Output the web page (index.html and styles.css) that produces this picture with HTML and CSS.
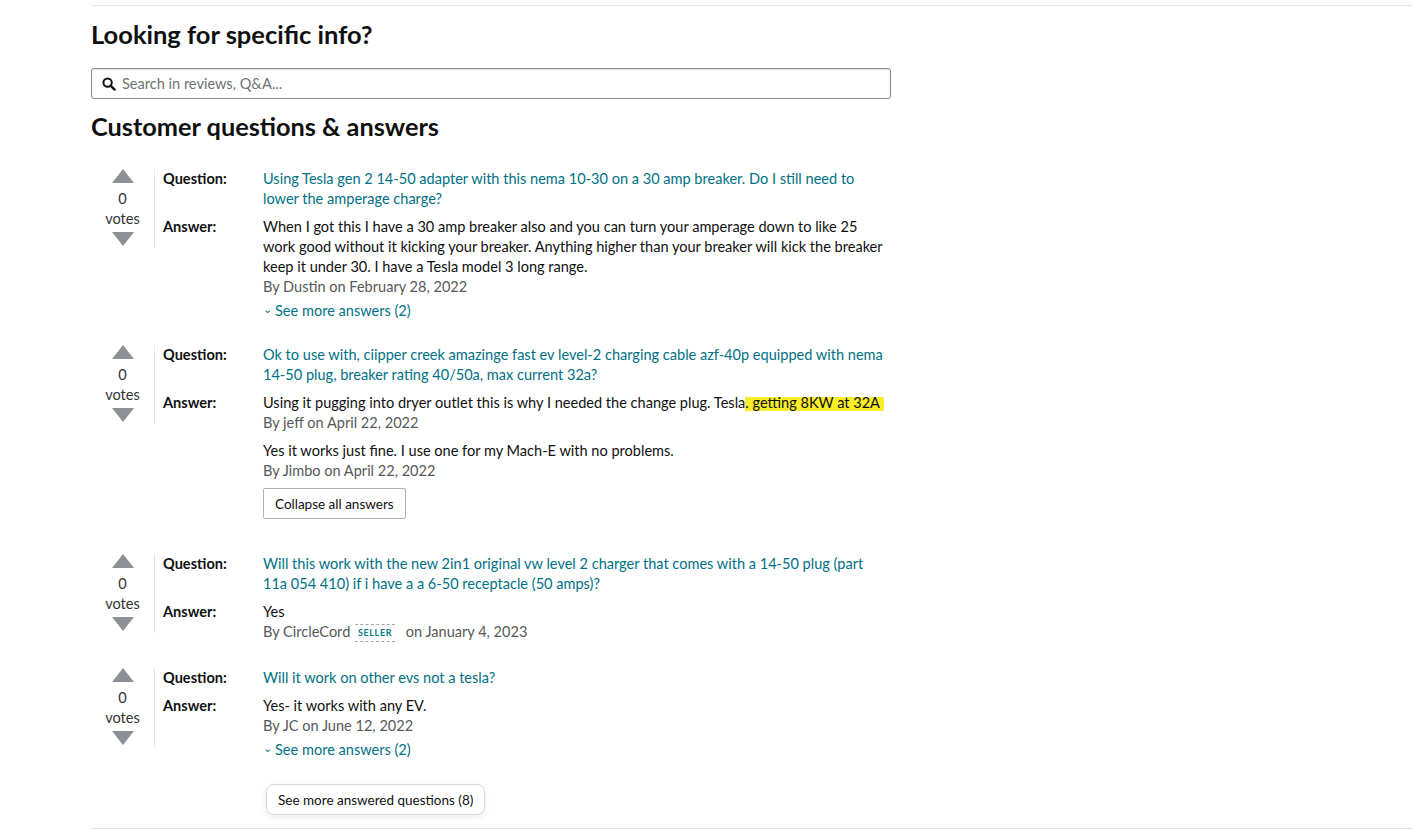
FILE: index.html
```html
<!DOCTYPE html>
<html lang="en">
<head>
    <meta charset="UTF-8">
    <meta name="viewport" content="width=device-width, initial-scale=1.0">
    <title>Customer questions &amp; answers</title>
    <link rel="stylesheet" href="styles.css">
</head>
<body>

<div class="page">
    <hr class="divider top">

    <h2 class="section-title">Looking for specific info?</h2>
    <div class="search">
        <svg class="search-icon" width="14" height="14" viewBox="0 0 14 14">
            <circle cx="5.6" cy="5.6" r="4.2" fill="none" stroke="#111" stroke-width="2"/>
            <path d="M8.6 8.6 L12.6 12.6" stroke="#111" stroke-width="2.4" stroke-linecap="round"/>
        </svg>
        <input type="text" placeholder="Search in reviews, Q&amp;A...">
    </div>

    <h2 class="section-title qa-title">Customer questions &amp; answers</h2>

    <div class="qa-list">
        <div class="qa">
            <div class="votes">
                <svg class="arrow" width="22" height="14" viewBox="0 0 22 14"><path d="M11 0 L22 14 L0 14 Z"/></svg>
                <span class="count">0</span>
                <span class="votes-label">votes</span>
                <svg class="arrow" width="22" height="14" viewBox="0 0 22 14"><path d="M0 0 L22 0 L11 14 Z"/></svg>
            </div>
            <div class="qa-body">
                <div class="qa-row">
                    <span class="label">Question:</span>
                    <div class="content"><a href="#">Using Tesla gen 2 14-50 adapter with this nema 10-30 on a 30 amp breaker. Do I still need to lower the amperage charge?</a></div>
                </div>
                <div class="qa-row">
                    <span class="label">Answer:</span>
                    <div class="content">
                        <p class="answer">When I got this I have a 30 amp breaker also and you can turn your amperage down to like 25 work good without it kicking your breaker. Anything higher than your breaker will kick the breaker keep it under 30. I have a Tesla model 3 long range.</p>
                        <p class="byline">By Dustin on February 28, 2022</p>
                        <a href="#" class="more"><span class="chevron">&#8964;</span>See more answers (2)</a>
                    </div>
                </div>
            </div>
        </div>

        <div class="qa">
            <div class="votes">
                <svg class="arrow" width="22" height="14" viewBox="0 0 22 14"><path d="M11 0 L22 14 L0 14 Z"/></svg>
                <span class="count">0</span>
                <span class="votes-label">votes</span>
                <svg class="arrow" width="22" height="14" viewBox="0 0 22 14"><path d="M0 0 L22 0 L11 14 Z"/></svg>
            </div>
            <div class="qa-body">
                <div class="qa-row">
                    <span class="label">Question:</span>
                    <div class="content"><a href="#">Ok to use with, ciipper creek amazinge fast ev level-2 charging cable azf-40p equipped with nema 14-50 plug, breaker rating 40/50a, max current 32a?</a></div>
                </div>
                <div class="qa-row">
                    <span class="label">Answer:</span>
                    <div class="content">
                        <p class="answer">Using it pugging into dryer outlet this is why I needed the change plug. Tesla<span class="mark">. getting 8KW at 32A</span></p>
                        <p class="byline">By jeff on April 22, 2022</p>
                        <p class="answer next">Yes it works just fine. I use one for my Mach-E with no problems.</p>
                        <p class="byline">By Jimbo on April 22, 2022</p>
                        <button class="btn collapse">Collapse all answers</button>
                    </div>
                </div>
            </div>
        </div>

        <div class="qa">
            <div class="votes">
                <svg class="arrow" width="22" height="14" viewBox="0 0 22 14"><path d="M11 0 L22 14 L0 14 Z"/></svg>
                <span class="count">0</span>
                <span class="votes-label">votes</span>
                <svg class="arrow" width="22" height="14" viewBox="0 0 22 14"><path d="M0 0 L22 0 L11 14 Z"/></svg>
            </div>
            <div class="qa-body">
                <div class="qa-row">
                    <span class="label">Question:</span>
                    <div class="content"><a href="#">Will this work with the new 2in1 original vw level 2 charger that comes with a 14-50 plug (part 11a 054 410) if i have a a 6-50 receptacle (50 amps)?</a></div>
                </div>
                <div class="qa-row">
                    <span class="label">Answer:</span>
                    <div class="content">
                        <p class="answer">Yes</p>
                        <p class="byline with-badge">By CircleCord <span class="seller">SELLER</span> on January 4, 2023</p>
                    </div>
                </div>
            </div>
        </div>

        <div class="qa">
            <div class="votes">
                <svg class="arrow" width="22" height="14" viewBox="0 0 22 14"><path d="M11 0 L22 14 L0 14 Z"/></svg>
                <span class="count">0</span>
                <span class="votes-label">votes</span>
                <svg class="arrow" width="22" height="14" viewBox="0 0 22 14"><path d="M0 0 L22 0 L11 14 Z"/></svg>
            </div>
            <div class="qa-body">
                <div class="qa-row">
                    <span class="label">Question:</span>
                    <div class="content"><a href="#">Will it work on other evs not a tesla?</a></div>
                </div>
                <div class="qa-row">
                    <span class="label">Answer:</span>
                    <div class="content">
                        <p class="answer">Yes- it works with any EV.</p>
                        <p class="byline">By JC on June 12, 2022</p>
                        <a href="#" class="more"><span class="chevron">&#8964;</span>See more answers (2)</a>
                    </div>
                </div>
            </div>
        </div>
    </div>

    <div class="footer-action">
        <button class="btn more-questions">See more answered questions (8)</button>
    </div>

    <hr class="divider bottom">
</div>

</body>
</html>
```

FILE: styles.css
```css
body {
    margin: 0;
    font-family: Lato, "Liberation Sans", sans-serif;
    font-size: 14.55px;
    line-height: 20px;
    color: #0f1111;
    background: #fff;
}
.page {
    margin-left: 91px;
}
.divider {
    border: none;
    border-top: 1px solid #e3e6e6;
    margin: 0;
}
.divider.top {
    margin-top: 5px;
}
.section-title {
    font-size: 25.5px;
    line-height: 32px;
    font-weight: 700;
    margin: 12px 0 18px;
}
.qa-title {
    font-size: 25.3px;
    margin: 11px 0 27px;
}
.search {
    width: 800px;
    height: 31px;
    box-sizing: border-box;
    border: 1px solid #888c8c;
    border-radius: 3px;
    display: flex;
    align-items: center;
    padding-left: 10px;
    box-shadow: 0 1px 2px rgba(15, 17, 17, 0.15) inset;
}
.search-icon {
    flex: none;
}
.search input {
    border: none;
    outline: none;
    flex: 1;
    font-family: inherit;
    font-size: 14.55px;
    color: #0f1111;
    padding: 0 0 0 6px;
    background: transparent;
}
.search input::placeholder {
    color: #6f7373;
}
.qa-list {
    width: 800px;
}
.qa {
    display: flex;
    align-items: flex-start;
    margin-bottom: 16px;
}
.votes {
    width: 63px;
    flex: none;
    border-right: 1px solid #e3e6e6;
    display: flex;
    flex-direction: column;
    align-items: center;
    color: #333;
    line-height: 20px;
    padding-top: 0;
    padding-bottom: 2px;
}
.arrow {
    fill: #8d9096;
    display: block;
}
.count {
    margin-top: 6px;
}
.votes-label {
    margin-bottom: 3px;
}
.qa-body {
    flex: 1;
    padding-left: 8px;
}
.qa-row {
    display: flex;
    margin-bottom: 8px;
}
.label {
    width: 100px;
    flex: none;
    font-weight: 700;
}
.content {
    flex: none;
    width: 624px;
}
.content p {
    margin: 0;
}
a {
    color: #007185;
    text-decoration: none;
}
.byline {
    color: #565959;
}
.byline.with-badge {
    padding-bottom: 2px;
}
.answer.next {
    margin-top: 8px;
}
.more {
    display: inline-block;
    margin-top: 4px;
}
.chevron {
    display: inline-block;
    font-size: 11px;
    line-height: 10px;
    margin-right: 3px;
    vertical-align: 3px;
}
.mark {
    background: linear-gradient(transparent 3px, #f8ee2a 3px, #f8ee2a 17px, transparent 17px);
    padding-right: 4px;
}
.seller {
    display: inline-block;
    font-size: 9px;
    font-weight: 700;
    letter-spacing: 0.6px;
    color: #067d8a;
    border-top: 1px dashed #a6a6a6;
    border-bottom: 1px dashed #a6a6a6;
    line-height: 16px;
    padding: 0 3px;
    margin: 2px 7px 0 1px;
    vertical-align: top;
}
.btn {
    font-family: inherit;
    font-size: 13.5px;
    color: #0f1111;
    background: #fff;
    border: 1px solid #adb1b8;
    border-radius: 2px;
    padding: 0 11px;
    height: 31px;
    cursor: pointer;
}
.collapse {
    display: block;
    margin-top: 7px;
    margin-bottom: 11px;
}
.footer-action {
    padding-left: 175px;
    margin-bottom: 13px;
}
.more-questions {
    border: 1px solid #d5d9d9;
    border-radius: 8px;
    box-shadow: 0 2px 5px rgba(213, 217, 217, 0.5);
    height: 31px;
}
```
